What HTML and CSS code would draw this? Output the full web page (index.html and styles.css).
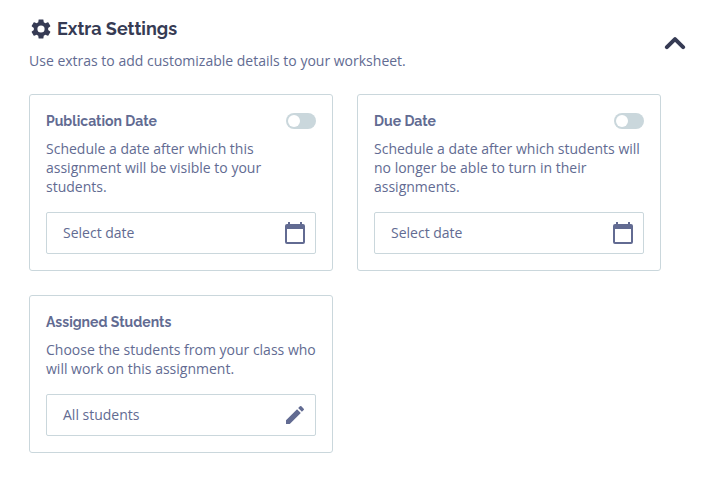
FILE: index.html
```html
<!DOCTYPE html>
<html lang="en">
<head>
<meta charset="utf-8">
<title>Extra Settings</title>
<link rel="stylesheet" href="styles.css">
</head>
<body>
<main class="settings">
  <header class="header">
    <div>
      <h1 class="title">
        <svg class="gear" viewBox="2 2 20 20"><path d="M19.14 12.94c.04-.3.06-.61.06-.94 0-.32-.02-.64-.07-.94l2.03-1.58c.18-.14.23-.41.12-.61l-1.92-3.32c-.12-.22-.37-.29-.59-.22l-2.39.96c-.5-.38-1.03-.7-1.62-.94l-.36-2.54c-.04-.24-.24-.41-.48-.41h-3.84c-.24 0-.43.17-.47.41l-.36 2.54c-.59.24-1.13.57-1.62.94l-2.39-.96c-.22-.08-.47 0-.59.22L2.74 8.87c-.12.21-.08.47.12.61l2.03 1.58c-.05.3-.09.63-.09.94s.02.64.07.94l-2.03 1.58c-.18.14-.23.41-.12.61l1.92 3.32c.12.22.37.29.59.22l2.39-.96c.5.38 1.03.7 1.62.94l.36 2.54c.05.24.24.41.48.41h3.84c.24 0 .44-.17.47-.41l.36-2.54c.59-.24 1.13-.56 1.62-.94l2.39.96c.22.08.47 0 .59-.22l1.92-3.32c.12-.22.07-.47-.12-.61zM12 15.6A3.6 3.6 0 1 1 12 8.4a3.6 3.6 0 0 1 0 7.2z"/></svg>
        <span class="title-text">Extra Settings</span>
      </h1>
      <p class="subtitle">Use extras to add customizable details to your worksheet.</p>
    </div>
    <svg class="chevron" viewBox="0 0 22 14"><path d="M2.900 11.200L11 3.200l8.100 8"/></svg>
  </header>
  <div class="cards">
    <section class="card">
      <div class="card-head"><h2>Publication Date</h2><span class="toggle"></span></div>
      <p>Schedule a date after which this<br>assignment will be visible to your<br>students.</p>
      <div class="field"><span>Select date</span><svg viewBox="0 0 24 24"><path d="M20 3h-1V1h-2v2H7V1H5v2H4a2 2 0 0 0-2 2v16a2 2 0 0 0 2 2h16a2 2 0 0 0 2-2V5a2 2 0 0 0-2-2zm0 18H4V8h16z"/></svg></div>
    </section>
    <section class="card">
      <div class="card-head"><h2>Due Date</h2><span class="toggle"></span></div>
      <p>Schedule a date after which students will<br>no longer be able to turn in their<br>assignments.</p>
      <div class="field"><span>Select date</span><svg viewBox="0 0 24 24"><path d="M20 3h-1V1h-2v2H7V1H5v2H4a2 2 0 0 0-2 2v16a2 2 0 0 0 2 2h16a2 2 0 0 0 2-2V5a2 2 0 0 0-2-2zm0 18H4V8h16z"/></svg></div>
    </section>
    <section class="card">
      <div class="card-head"><h2>Assigned Students</h2></div>
      <p>Choose the students from your class who<br>will work on this assignment.</p>
      <div class="field"><span>All students</span><svg viewBox="0 0 24 24"><path d="M3 17.250V21h3.750L17.810 9.940l-3.750-3.750zM20.710 7.040a1 1 0 0 0 0-1.410l-2.340-2.340a1 1 0 0 0-1.410 0l-1.830 1.830 3.750 3.750z"/></svg></div>
    </section>
  </div>
</main>
</body>
</html>
```
FILE: styles.css
```css
* { box-sizing: border-box; }
body { margin: 0; background: #fff; color: #626b92; font: 14px/19px "Open Sans", sans-serif; }
h1, h2, p { margin: 0; }
.settings { padding: 17px 39px 0 29px; }
.header { display: flex; justify-content: space-between; }
.title { display: flex; align-items: center; gap: 6px; height: 24px; padding-left: 2px; color: #363b54; font: 700 18px/24px Raleway, Lato, sans-serif; }
.gear { width: 20px; height: 20px; fill: #363b54; }
.subtitle { margin-top: 10px; }
.chevron { width: 22px; height: 14px; margin-top: 19px; fill: none; stroke: #363b54; stroke-width: 4; stroke-linejoin: round; stroke-linecap: round; }
.cards { display: grid; grid-template-columns: 304px 304px; gap: 24px; align-items: start; margin-top: 24px; }
.card { border: 1px solid #cad7dc; border-radius: 3px; padding: 16px; }
.card-head { display: flex; justify-content: space-between; align-items: center; height: 20px; margin-bottom: 8px; }
h2 { font: 700 14px/20px Raleway, Lato, sans-serif; }
.toggle { width: 30px; height: 16px; padding: 2px; border-radius: 8px; background: #cad7dc; }
.toggle::before { content: ""; display: block; width: 12px; height: 12px; border-radius: 50%; background: #fff; }
.field { display: flex; align-items: center; justify-content: space-between; height: 42px; margin-top: 16px; padding: 0 8px 0 16px; border: 1px solid #cad7dc; border-radius: 2px; }
.field span { padding-bottom: 2px; }
.field svg { width: 24px; height: 24px; fill: #626b92; }
```
